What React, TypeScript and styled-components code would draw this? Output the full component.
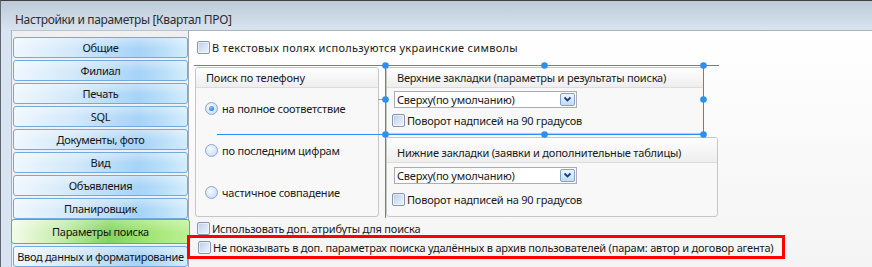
import styled, { createGlobalStyle } from "styled-components";

const GlobalStyle = createGlobalStyle`
  html, body {
    margin: 0;
    padding: 0;
    background: #ffffff;
  }
  body {
    font-family: "Noto Sans", "Open Sans", sans-serif;
    font-size: 11px;
    color: #1a1a1a;
  }
`;

const Window = styled.div`
  width: 872px;
  height: 267px;
  box-sizing: border-box;
  overflow: hidden;
  display: flex;
  flex-direction: column;
  background: #d8e4f1;
  border-top: 1px solid #3f3f3f;
  border-left: 1px solid #60666e;
`;

const TitleBar = styled.div`
  height: 29px;
  box-sizing: border-box;
  flex-shrink: 0;
  display: flex;
  align-items: flex-end;
  padding: 0 0 2px 14px;
  background: linear-gradient(#bccad9, #d9e4ef);
  font-size: 12px;
  line-height: 16px;
  letter-spacing: -0.35px;
  color: #2e2e2e;
`;

const Body = styled.div`
  flex: 1;
  display: flex;
  padding-left: 10px;
  min-height: 0;
`;

const Sidebar = styled.div`
  width: 177px;
  flex-shrink: 0;
  box-sizing: border-box;
  border-left: 1px solid #a3b1c1;
  border-top: 1px solid #b7c3cf;
  background: #f0f0f0;
  padding: 6px 0 0 1px;
`;

const Tab = styled.div<{ $active?: boolean }>`
  position: relative;
  z-index: 1;
  box-sizing: border-box;
  height: ${(p) => (p.$active ? 25 : 21)}px;
  margin: ${(p) => (p.$active ? "-2px -2px 2px" : "0 0 2px")};
  border: 1px solid ${(p) => (p.$active ? "#62b843" : "#72a9de")};
  border-radius: 3px;
  display: flex;
  align-items: center;
  justify-content: center;
  white-space: nowrap;
  font-size: 11px;
  letter-spacing: -0.3px;
  color: #141414;
  background: ${(p) =>
    p.$active
      ? "linear-gradient(rgba(255,255,255,0.3), rgba(255,255,255,0) 55%), linear-gradient(to right, #f3fce9 0%, #c4eca9 28%, #84d35f 55%, #a2e575 78%, #bdf194 100%)"
      : "linear-gradient(rgba(255,255,255,0.35), rgba(255,255,255,0) 55%), linear-gradient(to right, #eff7fe 0%, #d2e8fa 35%, #a6d3f7 72%, #b9def9 86%, #d3edfd 100%)"};
`;

const Content = styled.div`
  flex: 1;
  position: relative;
  border-left: 1px solid #9ea9b5;
  border-top: 1px solid #a9b4c0;
  background: linear-gradient(#ffffff, #f4f4f4);
  padding-left: 8px;
`;

const CheckRow = styled.label<{ $top?: number; $spacing?: number }>`
  display: flex;
  align-items: center;
  gap: 2px;
  height: 14px;
  margin-top: ${(p) => p.$top ?? 0}px;
  white-space: nowrap;
  letter-spacing: ${(p) => p.$spacing ?? -0.2}px;
`;

const Box = styled.span`
  width: 13px;
  height: 13px;
  box-sizing: border-box;
  flex-shrink: 0;
  border: 1px solid #8597ad;
  border-radius: 2px;
  background: linear-gradient(135deg, #b7cde8 0%, #d8e5f4 55%, #eef4fb 100%);
  box-shadow: inset 0 0 0 1px rgba(255, 255, 255, 0.55);
`;

const Groups = styled.div`
  display: grid;
  grid-template-columns: 184px 332px;
  column-gap: 7px;
  height: 150px;
  margin: 13px 0 0 -2px;
`;

const GroupBox = styled.div<{ $h?: number; $w?: number }>`
  box-sizing: border-box;
  height: ${(p) => (p.$h ? `${p.$h}px` : "auto")};
  width: ${(p) => (p.$w ? `${p.$w}px` : "auto")};
  flex: ${(p) => (p.$h ? "none" : "1")};
  border: 1px solid #c6c6c6;
  border-radius: 3px;
  background: #f8f8f8;
  display: flex;
  flex-direction: column;
  overflow: hidden;
`;

const GroupHeader = styled.div<{ $h: number }>`
  height: ${(p) => p.$h}px;
  flex-shrink: 0;
  display: flex;
  align-items: flex-end;
  padding: 0 0 2px 10px;
  box-sizing: border-box;
  line-height: 15px;
  border-bottom: 1px solid #dcdcdc;
  background: linear-gradient(#fefefe, #eeeeee);
  white-space: nowrap;
  letter-spacing: -0.2px;
`;

const RadioList = styled.div`
  flex: 1;
  display: grid;
  grid-template-rows: repeat(3, 1fr);
  align-items: center;
  padding: 0 0 3px 9px;
`;

const RadioRow = styled.label`
  display: flex;
  align-items: center;
  gap: 4px;
  white-space: nowrap;
  letter-spacing: -0.2px;
`;

const Radio = styled.span<{ $on?: boolean }>`
  width: 13px;
  height: 13px;
  box-sizing: border-box;
  border-radius: 50%;
  border: 1px solid #8ba7c9;
  display: flex;
  align-items: center;
  justify-content: center;
  background: radial-gradient(circle at 40% 35%, #f5f9fe 0%, #c3d8f1 100%);
  &::after {
    content: "";
    display: ${(p) => (p.$on ? "block" : "none")};
    width: 5px;
    height: 5px;
    border-radius: 50%;
    background: radial-gradient(circle at 40% 35%, #8cc4f5 0%, #2d7fdc 70%, #1c5fb4 100%);
  }
`;

const RightColumn = styled.div`
  display: flex;
  flex-direction: column;
  gap: 3px;
`;

const GroupBody = styled.div`
  display: flex;
  flex-direction: column;
  padding-left: 5px;
`;

const Combo = styled.div<{ $top: number }>`
  width: 183px;
  height: 17px;
  box-sizing: border-box;
  margin: ${(p) => p.$top}px 0 0 2px;
  border: 1px solid #abadb3;
  background: #ffffff;
  display: flex;
  align-items: center;
  justify-content: space-between;
  padding: 0 1px 0 2px;
  letter-spacing: -0.2px;
`;

const DropButton = styled.span`
  width: 15px;
  height: 13px;
  box-sizing: border-box;
  border: 1px solid #7aa3d3;
  border-radius: 2px;
  background: linear-gradient(#eef5fd, #c3dbf4);
  display: flex;
  align-items: center;
  justify-content: center;
`;

const Highlight = styled.div`
  position: relative;
  z-index: 2;
  width: 598px;
  height: 24px;
  box-sizing: border-box;
  margin-left: -10px;
  border: 3px solid #ff0000;
  padding-left: 8px;
  display: flex;
  align-items: center;
`;

const Overlay = styled.svg`
  position: absolute;
  left: 0;
  top: 0;
  width: 683px;
  height: 236px;
  pointer-events: none;
  z-index: 3;
`;

const tabs = [
  "Общие",
  "Филиал",
  "Печать",
  "SQL",
  "Документы, фото",
  "Вид",
  "Объявления",
  "Планировщик",
  "Параметры поиска",
  "Ввод данных и форматирование",
];

const handles: [number, number][] = [
  [385.5, 65.5],
  [544.5, 65.5],
  [703.5, 65.5],
  [385.5, 99.5],
  [703.5, 99.5],
  [385.5, 134.5],
  [544.5, 134.5],
  [703.5, 134.5],
];

function Chevron() {
  return (
    <svg width="9" height="7" viewBox="0 0 9 7">
      <path d="M1.5 1.5 L4.5 4.5 L7.5 1.5" fill="none" stroke="#1d3f7c" strokeWidth="1.8" />
    </svg>
  );
}

function App() {
  return (
    <Window>
      <GlobalStyle />
      <TitleBar>Настройки и параметры [Квартал ПРО]</TitleBar>
      <Body>
        <Sidebar>
          {tabs.map((t) => (
            <Tab key={t} $active={t === "Параметры поиска"}>
              {t}
            </Tab>
          ))}
        </Sidebar>
        <Content>
          <CheckRow $top={9} $spacing={0.3}>
            <Box />В текстовых полях используются украинские символы
          </CheckRow>
          <Groups>
            <GroupBox>
              <GroupHeader $h={20}>Поиск по телефону</GroupHeader>
              <RadioList>
                <RadioRow>
                  <Radio $on />
                  на полное соответствие
                </RadioRow>
                <RadioRow>
                  <Radio />
                  по последним цифрам
                </RadioRow>
                <RadioRow>
                  <Radio />
                  частичное совпадение
                </RadioRow>
              </RadioList>
            </GroupBox>
            <RightColumn>
              <GroupBox $h={67} $w={318}>
                <GroupHeader $h={20}>Верхние закладки (параметры и результаты поиска)</GroupHeader>
                <GroupBody>
                  <Combo $top={3}>
                    Сверху(по умолчанию)
                    <DropButton>
                      <Chevron />
                    </DropButton>
                  </Combo>
                  <CheckRow $top={5}>
                    <Box />
                    Поворот надписей на 90 градусов
                  </CheckRow>
                </GroupBody>
              </GroupBox>
              <GroupBox>
                <GroupHeader $h={25}>Нижние закладки (заявки и дополнительные таблицы)</GroupHeader>
                <GroupBody>
                  <Combo $top={4}>
                    Сверху(по умолчанию)
                    <DropButton>
                      <Chevron />
                    </DropButton>
                  </Combo>
                  <CheckRow $top={8}>
                    <Box />
                    Поворот надписей на 90 градусов
                  </CheckRow>
                </GroupBody>
              </GroupBox>
            </RightColumn>
          </Groups>
          <CheckRow $top={4}>
            <Box />
            Использовать доп. атрибуты для поиска
          </CheckRow>
          <Highlight>
            <CheckRow>
              <Box />
              Не показывать в доп. параметрах поиска удалённых в архив пользователей (парам: автор и договор агента)
            </CheckRow>
          </Highlight>
          <Overlay viewBox="189 31 683 236">
            <g stroke="#2b90f0" strokeWidth="1" fill="none">
              <line x1="194" y1="65.5" x2="719" y2="65.5" />
              <line x1="217" y1="134.5" x2="704" y2="134.5" />
              <line x1="385.5" y1="65" x2="385.5" y2="218" />
              <line x1="703.5" y1="65" x2="703.5" y2="135" />
            </g>
            <line x1="378" y1="99.5" x2="385" y2="99.5" stroke="#8fa3ba" strokeWidth="1" />
            {handles.map(([x, y]) => (
              <circle key={`${x}-${y}`} cx={x} cy={y} r="3.3" fill="#2b90f0" />
            ))}
          </Overlay>
        </Content>
      </Body>
    </Window>
  );
}

export default App;
